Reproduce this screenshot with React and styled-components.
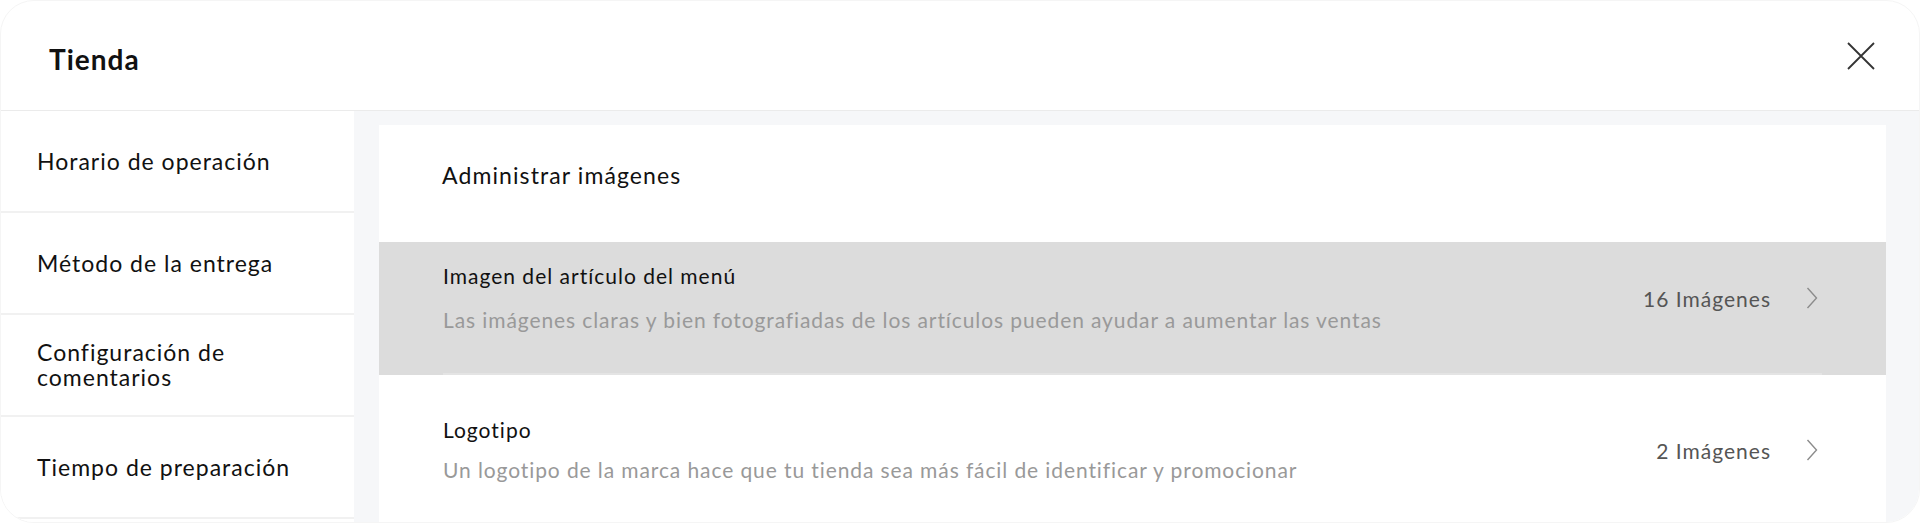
import React from 'react'
import styled, { createGlobalStyle } from 'styled-components'

const GlobalStyle = createGlobalStyle`
  html, body {
    margin: 0;
    padding: 0;
    background: #ffffff;
  }

  body {
    font-family: Lato, 'Noto Sans', sans-serif;
    color: #111111;
  }
`

const Modal = styled.div`
  height: 523px;
  display: flex;
  flex-direction: column;
  border-radius: 34px;
  border: 1px solid #f5f5f5;
  box-sizing: border-box;
  overflow: hidden;
  background: #ffffff;
`

const Header = styled.div`
  height: 110px;
  flex-shrink: 0;
  display: flex;
  align-items: center;
  justify-content: space-between;
  padding: 0 44px 0 48px;
  border-bottom: 1px solid #ebebeb;
  box-sizing: border-box;
`

const Title = styled.h1`
  margin: 0;
  font-size: 28px;
  font-weight: 700;
  letter-spacing: 1px;
  color: #111111;
  transform: translateY(3px);
`

const CloseButton = styled.button`
  width: 28px;
  height: 28px;
  padding: 0;
  border: none;
  background: none;
  cursor: pointer;
  display: flex;
  align-items: center;
  justify-content: center;
`

const Body = styled.div`
  flex: 1;
  min-height: 0;
  display: flex;
`

const Sidebar = styled.nav`
  width: 353px;
  flex-shrink: 0;
  background: #ffffff;
  display: flex;
  flex-direction: column;
`

const NavItem = styled.div`
  height: 102px;
  flex-shrink: 0;
  display: flex;
  align-items: center;
  padding: 0 36px;
  box-sizing: border-box;
  border-bottom: 2px solid #f1f1f1;
  font-size: 23px;
  line-height: 25px;
  letter-spacing: 1px;
  color: #111111;
  cursor: pointer;
`

const Content = styled.div`
  flex: 1;
  min-width: 0;
  background: #f6f7f9;
  padding: 14px 33px 0 25px;
`

const Card = styled.section`
  background: #ffffff;
  height: 100%;
`

const CardTitle = styled.h2`
  margin: 0;
  height: 117px;
  box-sizing: border-box;
  padding: 36px 0 0 63px;
  font-size: 23px;
  font-weight: 400;
  line-height: 28px;
  letter-spacing: 1.1px;
  color: #111111;
`

const Row = styled.div`
  padding: 0 64px;
  background: ${p => (p.$active ? '#dcdcdc' : '#ffffff')};
  cursor: pointer;
`

const RowInner = styled.div`
  display: flex;
  align-items: center;
  padding: ${p => (p.$first ? '20px 0 39px' : '41px 0 50px')};
  border-bottom: 2px solid #e4e4e4;
`

const RowText = styled.div`
  flex: 1;
  min-width: 0;
`

const RowTitle = styled.div`
  font-size: 21px;
  line-height: 28px;
  letter-spacing: 1px;
  color: #111111;
`

const RowDesc = styled.div`
  margin-top: ${p => (p.$first ? '16px' : '12px')};
  font-size: 21px;
  line-height: 28px;
  letter-spacing: 0.9px;
  color: #999999;
`

const RowValue = styled.div`
  display: flex;
  align-items: center;
  gap: 35px;
  margin-right: 4px;
  font-size: 21px;
  letter-spacing: 1px;
  color: #555555;
`

const Chevron = () => (
  <svg width='12' height='22' viewBox='0 0 12 22' fill='none'>
    <path d='M1.5 1 L10.5 11 L1.5 21' stroke='#8c8c8c' strokeWidth='1.4' />
  </svg>
)

const CloseIcon = () => (
  <svg width='28' height='28' viewBox='0 0 28 28' fill='none'>
    <path d='M1 1 L27 27 M27 1 L1 27' stroke='#333333' strokeWidth='1.8' />
  </svg>
)

const navItems = [
  ['Horario de operación'],
  ['Método de la entrega'],
  ['Configuración de', 'comentarios'],
  ['Tiempo de preparación']
]

const imageRows = [
  {
    title: 'Imagen del artículo del menú',
    desc: 'Las imágenes claras y bien fotografiadas de los artículos pueden ayudar a aumentar las ventas',
    value: '16 Imágenes'
  },
  {
    title: 'Logotipo',
    desc: 'Un logotipo de la marca hace que tu tienda sea más fácil de identificar y promocionar',
    value: '2 Imágenes'
  }
]

const App = () => (
  <>
    <GlobalStyle />
    <Modal>
      <Header>
        <Title>Tienda</Title>
        <CloseButton aria-label='Cerrar'>
          <CloseIcon />
        </CloseButton>
      </Header>
      <Body>
        <Sidebar>
          {navItems.map(lines => (
            <NavItem key={lines.join(' ')}>
              <span>
                {lines.map((line, i) => (
                  <React.Fragment key={line}>
                    {i > 0 && <br />}
                    {line}
                  </React.Fragment>
                ))}
              </span>
            </NavItem>
          ))}
        </Sidebar>
        <Content>
          <Card>
            <CardTitle>Administrar imágenes</CardTitle>
            {imageRows.map((row, i) => (
              <Row key={row.title} $active={i === 0}>
                <RowInner $first={i === 0}>
                  <RowText>
                    <RowTitle>{row.title}</RowTitle>
                    <RowDesc $first={i === 0}>{row.desc}</RowDesc>
                  </RowText>
                  <RowValue>
                    {row.value}
                    <Chevron />
                  </RowValue>
                </RowInner>
              </Row>
            ))}
          </Card>
        </Content>
      </Body>
    </Modal>
  </>
)

export default App
